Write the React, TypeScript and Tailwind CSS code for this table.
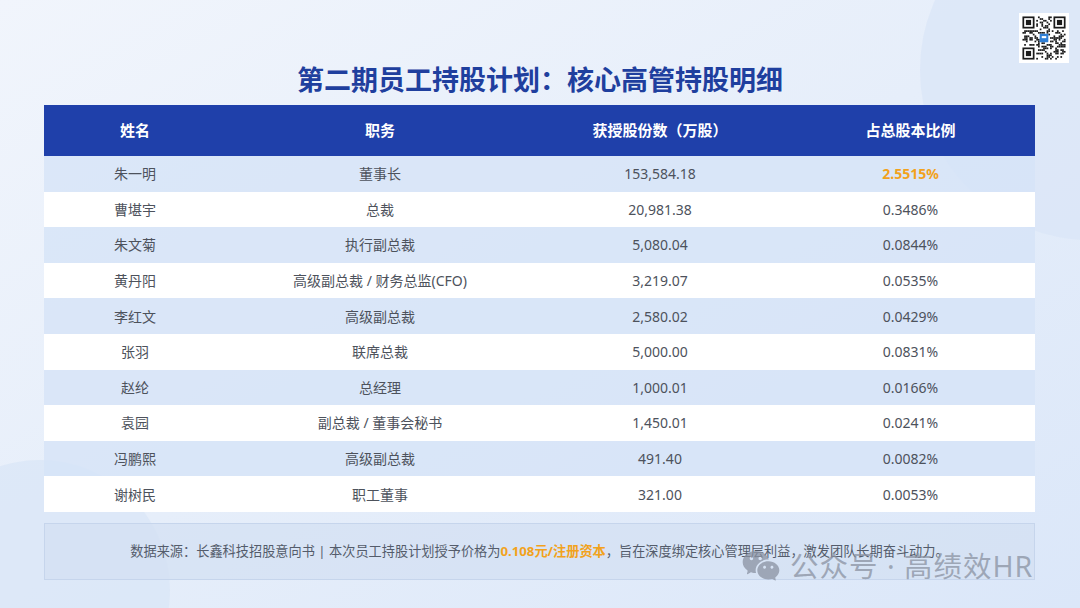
import { RiWechatFill } from 'react-icons/ri';

const rows = [
  ['朱一明', '董事长', '153,584.18', '2.5515%'],
  ['曹堪宇', '总裁', '20,981.38', '0.3486%'],
  ['朱文菊', '执行副总裁', '5,080.04', '0.0844%'],
  ['黄丹阳', '高级副总裁 / 财务总监(CFO)', '3,219.07', '0.0535%'],
  ['李红文', '高级副总裁', '2,580.02', '0.0429%'],
  ['张羽', '联席总裁', '5,000.00', '0.0831%'],
  ['赵纶', '总经理', '1,000.01', '0.0166%'],
  ['袁园', '副总裁 / 董事会秘书', '1,450.01', '0.0241%'],
  ['冯鹏熙', '高级副总裁', '491.40', '0.0082%'],
  ['谢树民', '职工董事', '321.00', '0.0053%'],
];

// pseudo-random QR modules, finder patterns drawn separately
function QrCode() {
  const n = 25;
  const cells: JSX.Element[] = [];
  let seed = 7;
  const rnd = () => {
    seed = (seed * 9301 + 49297) % 233280;
    return seed / 233280;
  };
  for (let y = 0; y < n; y++) {
    for (let x = 0; x < n; x++) {
      const inFinder = (x < 8 && y < 8) || (x > n - 9 && y < 8) || (x < 8 && y > n - 9);
      const inLogo = x > 9 && x < 15 && y > 9 && y < 15;
      if (inFinder || inLogo) continue;
      if (rnd() > 0.52) cells.push(<rect key={`${x}-${y}`} x={x} y={y} width={1} height={1} />);
    }
  }
  const finder = (fx: number, fy: number) => (
    <g key={`f${fx}${fy}`}>
      <rect x={fx} y={fy} width={7} height={7} />
      <rect x={fx + 1} y={fy + 1} width={5} height={5} fill="#fff" />
      <rect x={fx + 2} y={fy + 2} width={3} height={3} />
    </g>
  );
  return (
    <svg viewBox="-2 -2 29 29" className="h-[50px] w-[50px] bg-white" fill="#1a1a1a">
      {cells}
      {finder(0, 0)}
      {finder(n - 7, 0)}
      {finder(0, n - 7)}
      <rect x={10} y={10} width={5} height={5} fill="#2f7fd6" rx={0.5} />
      <rect x={11.2} y={11.4} width={2.6} height={1.2} fill="#fff" />
    </svg>
  );
}

export default function App() {
  return (
    <div
      className="relative h-[608px] w-[1080px] overflow-hidden bg-gradient-to-br from-[#f1f5fc] via-[#e6eefa] to-[#dbe7f9]"
      style={{ fontFamily: '"Noto Sans", "Noto Sans CJK SC", sans-serif' }}
    >
      {/* decorative circles */}
      <div className="absolute left-[920px] top-[-100px] h-[340px] w-[340px] rounded-full bg-[#dbe6f8]/80" />
      <div className="absolute left-[-90px] top-[460px] h-[260px] w-[260px] rounded-full bg-[#d9e5f7]/70" />

      <div className="absolute right-[10px] top-[12px] p-[1px]">
        <QrCode />
      </div>

      <div className="relative flex flex-col px-[44px] pt-[60px]">
        <h1 className="text-center text-[27px] font-bold leading-[40px] text-[#1f3f9e]">
          第二期员工持股计划：核心高管持股明细
        </h1>

        <div className="mt-[5px] w-[991px]">
          <div className="grid h-[51px] grid-cols-[182px_308px_252px_249px] items-center bg-[#1f40aa] text-[15px] font-bold text-white">
            <div className="text-center">姓名</div>
            <div className="text-center">职务</div>
            <div className="text-center">获授股份数（万股）</div>
            <div className="text-center">占总股本比例</div>
          </div>
          {rows.map((r, i) => (
            <div
              key={r[0]}
              className={`grid h-[35.6px] grid-cols-[182px_308px_252px_249px] items-center text-[14px] text-[#4d525c] ${
                i % 2 === 0 ? 'bg-[#d6e4f8]/80' : 'bg-white'
              }`}
            >
              <div className="text-center">{r[0]}</div>
              <div className="text-center">{r[1]}</div>
              <div className="text-center">{r[2]}</div>
              <div className={`text-center ${i === 0 ? 'font-bold text-[#f2a21c]' : ''}`}>{r[3]}</div>
            </div>
          ))}
        </div>

        <div className="mt-[11px] flex h-[57px] w-[991px] items-center justify-center border border-[#c6d5ec] bg-[#d3dff2]/70 text-[13.2px] text-[#545c6b]">
          <span>
            数据来源：长鑫科技招股意向书 | 本次员工持股计划授予价格为
            <span className="font-bold text-[#f2a21c]">0.108元/注册资本</span>
            ，旨在深度绑定核心管理层利益，激发团队长期奋斗动力。
          </span>
        </div>
      </div>

      {/* watermark */}
      <div className="absolute left-[740px] top-[546px] flex items-center gap-[8px] text-[#8a92a2]/75">
        <RiWechatFill className="h-[40px] w-[42px]" />
        <span className="text-[28.5px] leading-none tracking-[1px]">公众号 · 高绩效HR</span>
      </div>
    </div>
  );
}
